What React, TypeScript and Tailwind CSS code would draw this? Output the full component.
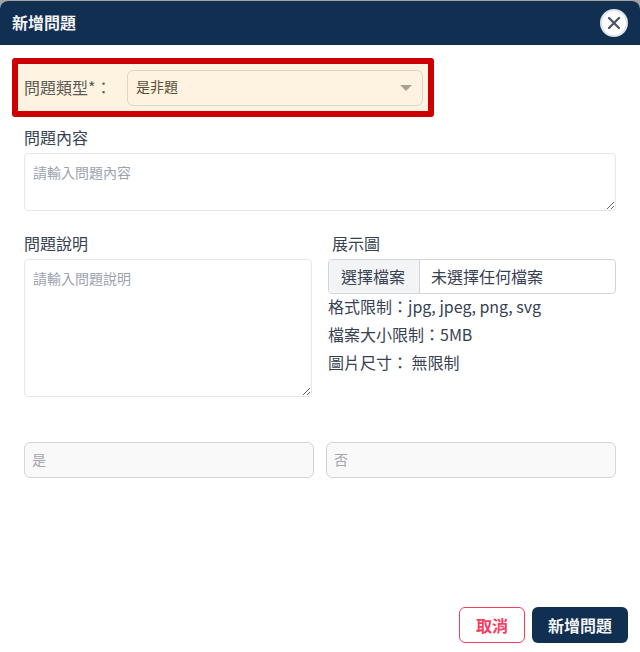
import React from "react";
import { X } from "lucide-react";

const font = "font-['Noto_Sans_CJK_TC','Noto_Sans',sans-serif]";

const App: React.FC = () => {
  return (
    <div className={`h-[652px] w-[640px] overflow-hidden bg-[#a3a3a3] pt-px ${font}`}>
      <div className="flex h-[651px] flex-col rounded-t-lg bg-white">
        <div className="flex h-11 shrink-0 items-center justify-between rounded-t-lg bg-[#112f50] pl-3 pr-3">
          <h2 className="pb-[3px] text-base font-bold text-[#f3f4f6]">新增問題</h2>
          <button className="flex h-7 w-7 items-center justify-center rounded-full border-2 border-[#dbe3ec] bg-white text-[#4b5563]">
            <X className="h-5 w-5" strokeWidth={2.8} />
          </button>
        </div>

        <div className="flex flex-1 flex-col">
          <div className="ml-3 mt-[13px] flex h-[59px] w-[422px] items-center rounded-[3px] border-[6px] border-[#cc0000] bg-[#fef3e0] pl-[6px] pr-[5px]">
            <label className="w-[103px] shrink-0 pb-[2px] text-base text-[#5b5a55]">問題類型*：</label>
            <div className="flex h-9 flex-1 items-center justify-between rounded-md border border-[#e0d6c5] pl-2 pr-[10px] text-sm text-[#5b4f3c]">
              <span className="pb-[3px]">是非題</span>
              <span className="h-0 w-0 border-x-[6px] border-t-[6px] border-x-transparent border-t-[#a8a296]" />
            </div>
          </div>

          <div className="mt-[9px] px-6">
            <label className="block h-6 text-base leading-[22px] text-[#374151]">問題內容</label>
            <textarea
              className="mt-[3px] block h-[58px] w-full rounded border border-[#e5e7eb] px-2 py-2 text-sm outline-none placeholder:text-[#9ca3af]"
              placeholder="請輸入問題內容"
            />
          </div>

          <div className="mt-[22px] flex pl-6 pr-6">
            <div className="w-[288px] shrink-0">
              <label className="block h-6 text-base leading-[20px] text-[#374151]">問題說明</label>
              <textarea
                className="mt-[2px] block h-[138px] w-full rounded border border-[#e5e7eb] px-2 py-2 text-sm outline-none placeholder:text-[#9ca3af]"
                placeholder="請輸入問題說明"
              />
            </div>
            <div className="ml-4 flex-1">
              <label className="ml-1 block h-6 text-base leading-[20px] text-[#374151]">展示圖</label>
              <div className="mt-[2px] flex h-[35px] overflow-hidden rounded border border-[#d1d5db] text-base text-[#374151]">
                <span className="flex w-[91px] items-center justify-center border-r border-[#d1d5db] bg-[#f3f4f6] pb-[2px] pr-[2px]">選擇檔案</span>
                <span className="flex items-center pb-[2px] pl-[11px]">未選擇任何檔案</span>
              </div>
              <div className="-mt-[2px] text-base leading-7 text-[#374151]">
                <p>格式限制：jpg, jpeg, png, svg</p>
                <p>檔案大小限制：5MB</p>
                <p>圖片尺寸： 無限制</p>
              </div>
            </div>
          </div>

          <div className="mt-[45px] flex gap-3 px-6">
            <input
              disabled
              placeholder="是"
              className="h-9 min-w-0 flex-1 rounded-md border border-[#d4d4dc] bg-[#f9f9f9] pb-[2px] pl-[7px] text-sm placeholder:text-[#a3a3a8]"
            />
            <input
              disabled
              placeholder="否"
              className="h-9 min-w-0 flex-1 rounded-md border border-[#d4d4dc] bg-[#f9f9f9] pb-[2px] pl-[7px] text-sm placeholder:text-[#a3a3a8]"
            />
          </div>

          <div className="mt-auto flex justify-end gap-[7px] pb-[9px] pr-3">
            <button className="h-9 w-[66px] rounded-md border border-[#f43f5e] bg-white text-base font-bold text-[#f43f5e]">取消</button>
            <button className="h-9 w-[96px] rounded-md bg-[#112f50] text-base font-bold text-[#f3f4f6]">新增問題</button>
          </div>
        </div>
      </div>
    </div>
  );
};

export default App;
